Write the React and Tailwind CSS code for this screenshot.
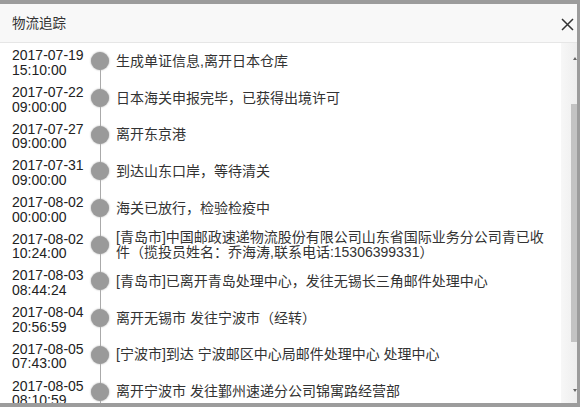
import React from "react";

const rows = [
  ["2017-07-19", "15:10:00", "生成单证信息,离开日本仓库"],
  ["2017-07-22", "09:00:00", "日本海关申报完毕，已获得出境许可"],
  ["2017-07-27", "09:00:00", "离开东京港"],
  ["2017-07-31", "09:00:00", "到达山东口岸，等待清关"],
  ["2017-08-02", "00:00:00", "海关已放行，检验检疫中"],
  ["2017-08-02", "10:24:00", "[青岛市]中国邮政速递物流股份有限公司山东省国际业务分公司青已收件（揽投员姓名：乔海涛,联系电话:15306399331）"],
  ["2017-08-03", "08:44:24", "[青岛市]已离开青岛处理中心，发往无锡长三角邮件处理中心"],
  ["2017-08-04", "20:56:59", "离开无锡市 发往宁波市（经转）"],
  ["2017-08-05", "07:43:00", "[宁波市]到达 宁波邮区中心局邮件处理中心 处理中心"],
  ["2017-08-05", "08:10:59", "离开宁波市 发往鄞州速递分公司锦寓路经营部"],
];

export default function App() {
  return (
    <div
      className="w-[580px] h-[407px] overflow-hidden bg-[#9c9c9c] pt-[4px] pr-[3px] pb-[4px] flex flex-col"
      style={{ fontFamily: '"Liberation Sans", "Noto Sans CJK SC", sans-serif' }}
    >
      <div className="h-[39px] shrink-0 bg-[#f8f8f8] border-b border-[#e6e6e6] flex items-center justify-between pl-[12px] pr-[3px]">
        <span className="text-[13.5px] text-[#333] leading-none" style={{ fontFamily: '"Noto Sans CJK SC", sans-serif' }}>物流追踪</span>
        <svg width="13" height="13" viewBox="0 0 13 13" className="mt-[2px]">
          <path d="M1 1 L12 12 M12 1 L1 12" stroke="#333" strokeWidth="1.5" fill="none" />
        </svg>
      </div>
      <div className="flex-1 min-h-0 flex bg-white">
        <div className="flex-1 min-w-0 overflow-hidden">
          {rows.map((r, i) => (
            <div key={i} className="h-[36.7px] flex items-stretch pl-[12px]">
              <div className="w-[76px] shrink-0 flex flex-col justify-center pt-[3px] text-[14px] leading-[14.5px] text-[#222]">
                <span>{r[0]}</span>
                <span>{r[1]}</span>
              </div>
              <div className="w-[24px] shrink-0 flex flex-col items-center">
                <div className={"flex-1 w-px " + (i === 0 ? "bg-transparent" : "bg-[#aaaaaa]")} />
                <div className="w-[18px] h-[18px] shrink-0 rounded-full bg-[#9a9a9a] shadow-[0_0_2px_#999]" />
                <div className="flex-1 w-px bg-[#aaaaaa]" />
              </div>
              <div className="ml-[4px] w-[434px] flex items-center text-[14px] leading-[15px] text-[#333]">
                <span>{r[2]}</span>
              </div>
            </div>
          ))}
        </div>
        <div className="w-[16px] shrink-0 bg-gradient-to-r from-[#f7f7f7] to-[#eeeeee] flex flex-col items-end">
          <div className="h-[14px]" />
          <svg width="4" height="3" viewBox="0 0 4 3">
            <path d="M0 3 L2 0 L4 3 Z" fill="#666" />
          </svg>
          <div className="h-[44px]" />
          <div className="w-[6px] h-[238px] bg-[#c3c3c3]" />
          <div className="flex-1" />
          <svg width="4" height="3" viewBox="0 0 4 3">
            <path d="M0 0 L2 3 L4 0 Z" fill="#666" />
          </svg>
          <div className="h-[11px]" />
        </div>
      </div>
    </div>
  );
}
